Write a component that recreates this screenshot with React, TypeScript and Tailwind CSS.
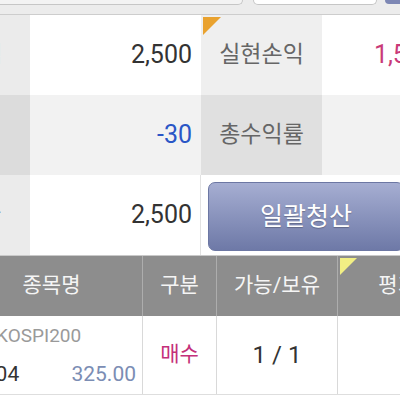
import React from "react";

function Tri({ color, size }: { color: string; size: number }) {
  return (
    <svg width={size} height={size} viewBox="0 0 10 10" className="absolute left-[2px] top-[2px]">
      <polygon points="0,0 10,0 0,10" fill={color} />
    </svg>
  );
}

export default function App() {
  return (
    <div className="w-[400px] h-[400px] overflow-hidden bg-white font-[family-name:Roboto,'Noto_Sans_CJK_KR',sans-serif]">
      <div className="ml-[-90px] w-[640px]">
        {/* top strip */}
        <div className="h-[15px] bg-[#ececec] border-b border-[#cdcdcd] flex items-start">
          <div className="w-[333px] h-[5px] bg-[#f3f3f3] border border-t-0 border-[#c6c6c6] rounded-b-[5px]" />
          <div className="ml-[10px] w-[124px] h-[5px] bg-white border border-t-0 border-[#c6c6c6] rounded-b-[5px]" />
          <div className="ml-[8px] w-[60px] h-[4px] bg-[#7d87b4] rounded-b-[5px]" />
        </div>

        {/* row 1 */}
        <div className="flex h-[80px]">
          <div className="w-[120px] bg-[#ebebeb] flex items-center justify-end pr-[28px] text-[23px] text-[#666]">매입금액</div>
          <div className="w-[171px] bg-white flex items-center justify-end pr-[9px] text-[25px] text-[#333]">2,500</div>
          <div className="relative w-[121px] bg-[#efefef] flex items-center justify-center text-[23px] text-[#666]">
            <Tri color="#e9a22f" size={18} />
            실현손익
          </div>
          <div className="w-[122px] bg-white flex items-center justify-end pr-[9px] text-[25px] text-[#c93a78]">1,500</div>
        </div>

        {/* row 2 */}
        <div className="flex h-[80px]">
          <div className="w-[120px] bg-[#dcdcdc] flex items-center justify-end pr-[28px] text-[23px] text-[#666]">평가손익</div>
          <div className="w-[171px] bg-[#f2f2f2] flex items-center justify-end pr-[9px] text-[25px] text-[#2a56c6]">-30</div>
          <div className="w-[121px] bg-[#e0e0e0] flex items-center justify-center text-[23px] text-[#666]">총수익률</div>
          <div className="w-[122px] bg-[#f2f2f2]" />
        </div>

        {/* row 3 */}
        <div className="flex h-[81px] border-b border-[#c9c9c9]">
          <div className="w-[120px] bg-[#ebebeb] flex items-center justify-end pr-[29px] text-[23px] text-[#666]">청산가</div>
          <div className="w-[171px] bg-white border-r border-[#e2e2e2] flex items-center justify-end pr-[8px] text-[25px] text-[#333]">2,500</div>
          <div className="pl-[7px] pt-[7px]">
            <div className="w-[196px] h-[69px] rounded-[7px] bg-gradient-to-b from-[#a6aed2] to-[#6e79a7] border border-[#6c77a3] flex items-center justify-center text-[25px] text-white [text-shadow:0_1px_1px_rgba(0,0,0,0.25)]">
              일괄청산
            </div>
          </div>
        </div>

        {/* header */}
        <div className="flex h-[60px] bg-[#8d8d8d] text-[21px] text-[#f5f5f5]">
          <div className="w-[233px] border-r border-[#adadad] flex items-center justify-center pl-[51px]">종목명</div>
          <div className="w-[74px] border-r border-[#adadad] flex items-center justify-center">구분</div>
          <div className="w-[121px] border-r border-[#adadad] flex items-center justify-center">가능/보유</div>
          <div className="relative w-[158px] flex items-center justify-center">
            <Tri color="#f2ef84" size={17} />
            평가손익
          </div>
        </div>

        {/* data row */}
        <div className="flex h-[79px] border-b border-[#dedede] bg-white">
          <div className="w-[233px] border-r border-[#d9d9d9] flex flex-col justify-center gap-[10px] pl-[62px] pr-[6px]">
            <div className="ml-[24px] h-[28px] leading-[28px] text-[19px] text-[#9a9a9a]">KOSPI200</div>
            <div className="h-[28px] leading-[28px] flex justify-between items-center text-[21px]">
              <span className="text-[#333]">2104</span>
              <span className="text-[#7b8db4]">325.00</span>
            </div>
          </div>
          <div className="w-[74px] border-r border-[#d9d9d9] flex items-center justify-center text-[21px] text-[#c4307a]">매수</div>
          <div className="w-[121px] border-r border-[#d9d9d9] flex items-center justify-center text-[24px] text-[#333]">1 / 1</div>
          <div className="w-[158px]" />
        </div>
      </div>
    </div>
  );
}
